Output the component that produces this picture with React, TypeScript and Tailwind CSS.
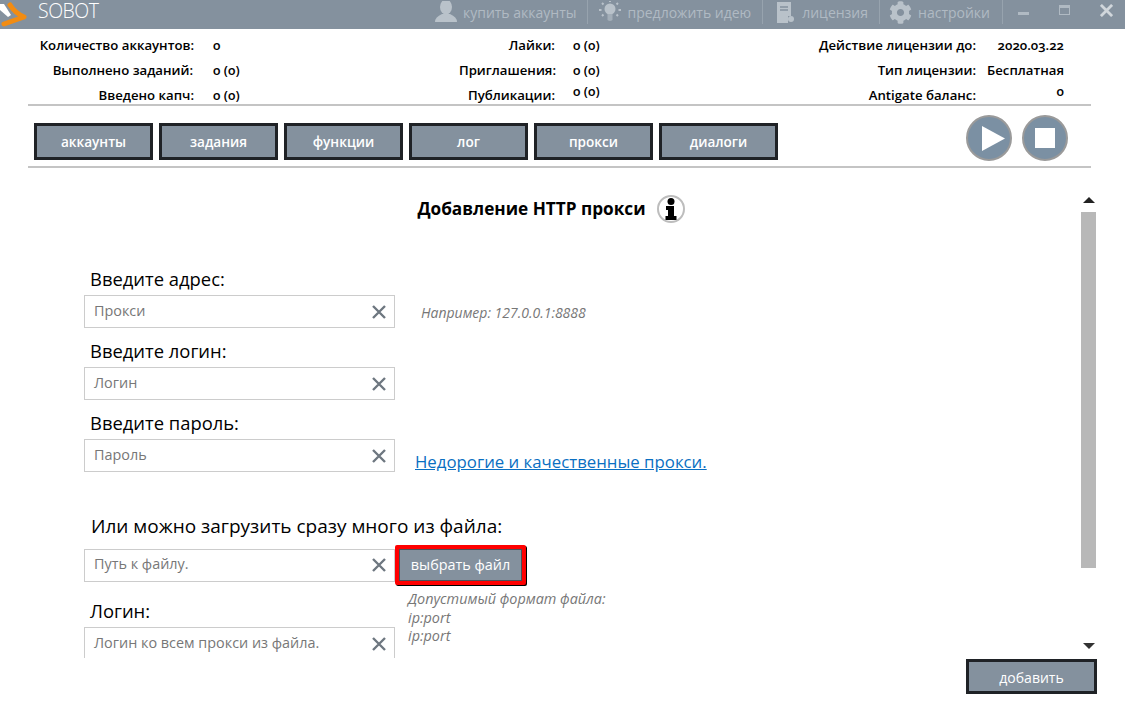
import { FaCog } from 'react-icons/fa';

const stat = "font-['Open_Sans'] text-[13.2px] font-semibold text-black leading-none oldstyle-nums";

function Stat({ label, value, labelW, gap, valueW, right, raised }: { label: string; value: string; labelW: string; gap: string; valueW?: string; right?: boolean; raised?: boolean }) {
  return (
    <div className={`flex items-center h-[25px] ${stat}`}>
      <span className={`${labelW} text-right whitespace-nowrap`}>{label}</span>
      <span className={`${gap} ${valueW ?? ''} ${right ? 'text-right' : ''} ${raised ? 'mb-[8px]' : ''} whitespace-nowrap`}>{value}</span>
    </div>
  );
}

function TopLink({ icon, text, gap, className }: { icon: React.ReactNode; text: string; gap: string; className: string }) {
  return (
    <div className={`flex items-center h-[24px] ${className}`}>
      {icon}
      <span className={`${gap} text-[14px] text-[#b0bac3] whitespace-nowrap`}>{text}</span>
    </div>
  );
}

function Tab({ text }: { text: string }) {
  return (
    <button className="w-[119px] h-[37px] pt-[1px] bg-[#84919e] border-[3px] border-[#1f2226] text-white text-[13.6px] font-semibold">
      {text}
    </button>
  );
}

function Field({ placeholder }: { placeholder: string }) {
  return (
    <div className="w-[311px] h-[33px] shrink-0 border border-[#cccccc] flex items-center justify-between pl-[9px] pr-[7px] bg-white">
      <span className="text-[#777777] text-[14.4px] mb-[2px]">{placeholder}</span>
      <svg width="16" height="16" viewBox="0 0 16 16" className="text-[#6e7780]">
        <path d="M2 2 L14 14 M14 2 L2 14" stroke="currentColor" strokeWidth="2.4" fill="none" />
      </svg>
    </div>
  );
}

function Label({ text }: { text: string }) {
  return <div className="pl-[6px] h-[39px] flex items-end pb-[7px] text-[18.4px] text-black leading-none">{text}</div>;
}

export default function App() {
  return (
    <div className="w-[1125px] h-[712px] bg-white overflow-hidden font-['Open_Sans',sans-serif]">
      <header className="h-[29px] bg-[#84919e] flex items-start">
        <svg width="36" height="29" viewBox="0 0 36 29" className="shrink-0">
          <path d="M10 5 Q15 13 24 17 L4 24" fill="none" stroke="#f28c12" strokeWidth="5" strokeLinecap="round" strokeLinejoin="round" />
          <path d="M0 4 L4 4 L11 15 L8 17 L0 10 Z" fill="#ffffff" />
        </svg>
        <span className="ml-[2px] mt-[1px] text-[19.5px] leading-[20px] text-white tracking-[-0.5px] font-light">SOBOT</span>
        <div className="ml-auto flex items-start pr-[12px]">
          <TopLink
            className="pr-[10px] border-r border-[#97a3ae]"
            gap="ml-[6px]"
            icon={
              <svg width="22" height="22" viewBox="0 0 22 22" className="shrink-0">
                <ellipse cx="11" cy="6" rx="6" ry="7.5" fill="#b9c2ca" />
                <path d="M0 21 Q0 16 7 13 H15 Q22 16 22 21 Z" fill="#b9c2ca" />
              </svg>
            }
            text="купить аккаунты"
          />
          <TopLink
            className="ml-[11px] pr-[11px] border-r border-[#97a3ae]"
            gap="ml-[7px]"
            icon={
              <svg width="22" height="22" viewBox="0 0 22 22" className="shrink-0">
                <circle cx="11" cy="8" r="5.5" fill="#b9c2ca" />
                <path d="M8.5 13 H13.5 V19 Q11 21 8.5 19 Z" fill="#a3aeb8" />
                <path d="M11 0 V1 M3 2 L4.5 3.5 M19 2 L17.5 3.5 M0 9 H2.5 M19.5 9 H22 M3 15 L4.5 13.5 M19 15 L17.5 13.5" stroke="#b9c2ca" strokeWidth="2" />
              </svg>
            }
            text="предложить идею"
          />
          <TopLink
            className="ml-[14px] pr-[11px] border-r border-[#97a3ae]"
            gap="ml-[8px]"
            icon={
              <svg width="17" height="21" viewBox="0 0 17 21" className="shrink-0">
                <path d="M0 0 H14 V14 H11 V21 H0 Z" fill="#b9c2ca" />
                <path d="M3 5 H11 M3 8 H11" stroke="#84919e" strokeWidth="1.3" />
                <circle cx="14" cy="17" r="3" fill="#b9c2ca" />
              </svg>
            }
            text="лицензия"
          />
          <TopLink
            className="ml-[9px] pr-[12px] border-r border-[#97a3ae]"
            gap="ml-[6px]"
            icon={<FaCog size={23} color="#b9c2ca" className="shrink-0" />}
            text="настройки"
          />
          <div className="flex items-center h-[20px] gap-[30px] ml-[15px]">
            <div className="w-[11px] h-[3px] bg-[#b0bac3] mt-[6px]" />
            <div className="w-[11px] h-[10px] border border-t-[3px] border-[#b0bac3]" />
            <svg width="13" height="13" viewBox="0 0 14 14"><path d="M1 1 L13 13 M13 1 L1 13" stroke="#d0d6db" strokeWidth="3" /></svg>
          </div>
        </div>
      </header>

      <section className="ml-[28px] mr-[34px] h-[77px] pt-[4px] border-b-2 border-[#c4c4c4] flex">
        <div className="w-[300px]">
          <Stat label="Количество аккаунтов:" value="0" labelW="w-[166px]" gap="ml-[19px]" />
          <Stat label="Выполнено заданий:" value="0 (0)" labelW="w-[165px]" gap="ml-[20px]" />
          <Stat label="Введено капч:" value="0 (0)" labelW="w-[166px]" gap="ml-[19px]" />
        </div>
        <div className="w-[300px]">
          <Stat label="Лайки:" value="0 (0)" labelW="w-[227px]" gap="ml-[18px]" />
          <Stat label="Приглашения:" value="0 (0)" labelW="w-[228px]" gap="ml-[17px]" />
          <Stat label="Публикации:" value="0 (0)" labelW="w-[227px]" gap="ml-[18px]" raised />
        </div>
        <div className="w-[456px]">
          <Stat label="Действие лицензии до:" value="2020.03.22" labelW="w-[348px]" gap="ml-[8px]" valueW="w-[80px]" right />
          <Stat label="Тип лицензии:" value="Бесплатная" labelW="w-[348px]" gap="ml-[8px]" valueW="w-[80px]" right />
          <Stat label="Antigate баланс:" value="0" labelW="w-[348px]" gap="ml-[8px]" valueW="w-[80px]" right raised />
        </div>
      </section>

      <nav className="ml-[28px] mr-[34px] h-[62px] border-b-2 border-[#c4c4c4] flex items-start pt-[17px] pl-[6px] gap-[6px]">
        <Tab text="аккаунты" />
        <Tab text="задания" />
        <Tab text="функции" />
        <Tab text="лог" />
        <Tab text="прокси" />
        <Tab text="диалоги" />
        <div className="ml-auto mr-[23px] -mt-[8px] flex gap-[10px]">
          <div className="w-[46px] h-[46px] rounded-full bg-[#7b90a3] border-2 border-[#9a9a9a] flex items-center justify-center">
            <svg width="23" height="25" viewBox="0 0 23 25" className="ml-[9px]"><path d="M0 0 L23 12.5 L0 25 Z" fill="#fff" /></svg>
          </div>
          <div className="w-[46px] h-[46px] rounded-full bg-[#7b90a3] border-2 border-[#9a9a9a] flex items-center justify-center">
            <div className="w-[20px] h-[20px] bg-white" />
          </div>
        </div>
      </nav>

      <main className="flex h-[543px] pt-[27px]">
        <div className="w-[966px] h-[463px] overflow-hidden">
          <div className="flex items-center justify-center gap-[11px] pl-[136px] h-[28px]">
            <h1 className="text-[17.2px] font-bold text-black whitespace-nowrap">Добавление HTTP прокси</h1>
            <svg width="28" height="28" viewBox="0 0 28 28" className="shrink-0">
              <circle cx="14" cy="14" r="13" fill="#fff" stroke="#bdbdbd" strokeWidth="2" />
              <circle cx="14" cy="6.5" r="3.5" fill="#000" />
              <path d="M9 11 H17 V21 H19.5 V25 H8.5 V21 H11 V15 H9 Z" fill="#000" />
            </svg>
          </div>

          <div className="ml-[84px] mt-[33px]">
            <Label text="Введите адрес:" />
            <div className="flex items-center">
              <Field placeholder="Прокси" />
              <span className="ml-[26px] mt-[2px] text-[14px] italic text-[#777777]">Например: 127.0.0.1:8888</span>
            </div>
            <Label text="Введите логин:" />
            <Field placeholder="Логин" />
            <Label text="Введите пароль:" />
            <div className="flex items-end">
              <Field placeholder="Пароль" />
              <a className="ml-[20px] text-[16.8px] text-[#0a6fc2] underline leading-[20px]">Недорогие и качественные прокси.</a>
            </div>
            <div className="h-[73px] pl-[7px] flex items-end pb-[9px] text-[19px] text-black leading-none">Или можно загрузить сразу много из файла:</div>
            <div className="flex items-center">
              <Field placeholder="Путь к файлу." />
              <button className="w-[131px] h-[40px] bg-[#84919e] border-[4px] border-[#ff0000] rounded-[2px] shadow-[1px_1px_0_#000] text-white text-[14.4px] font-medium outline outline-1 outline-offset-[-5px] outline-[#4a5058]">
                выбрать файл
              </button>
            </div>
            <div className="flex">
              <div>
                <div className="h-[3px]" />
                <Label text="Логин:" />
                <Field placeholder="Логин ко всем прокси из файла." />
              </div>
              <div className="ml-[13px] mt-[5px] text-[14.4px] italic text-[#777777] leading-[18.5px]">
                <div>Допустимый формат файла:</div>
                <div>ip:port</div>
                <div>ip:port</div>
              </div>
            </div>
          </div>
        </div>

        <div className="w-[131px] flex flex-col items-end pt-[2px]">
          <div className="w-0 h-0 mr-[2px] border-x-[6px] border-x-transparent border-b-[6px] border-b-[#222222]" />
          <div className="w-[15px] h-[356px] shrink-0 mr-[1px] bg-[#b8b8b8] mt-[9px]" />
          <div className="w-0 h-0 mr-[2px] border-x-[6px] border-x-transparent border-t-[6px] border-t-[#333333] mt-[75px]" />
          <button className="shrink-0 mt-[10px] w-[131px] h-[35px] pt-[1px] bg-[#84919e] border-[3px] border-[#1f2226] text-white text-[14px] font-medium">
            добавить
          </button>
        </div>
      </main>
    </div>
  );
}
